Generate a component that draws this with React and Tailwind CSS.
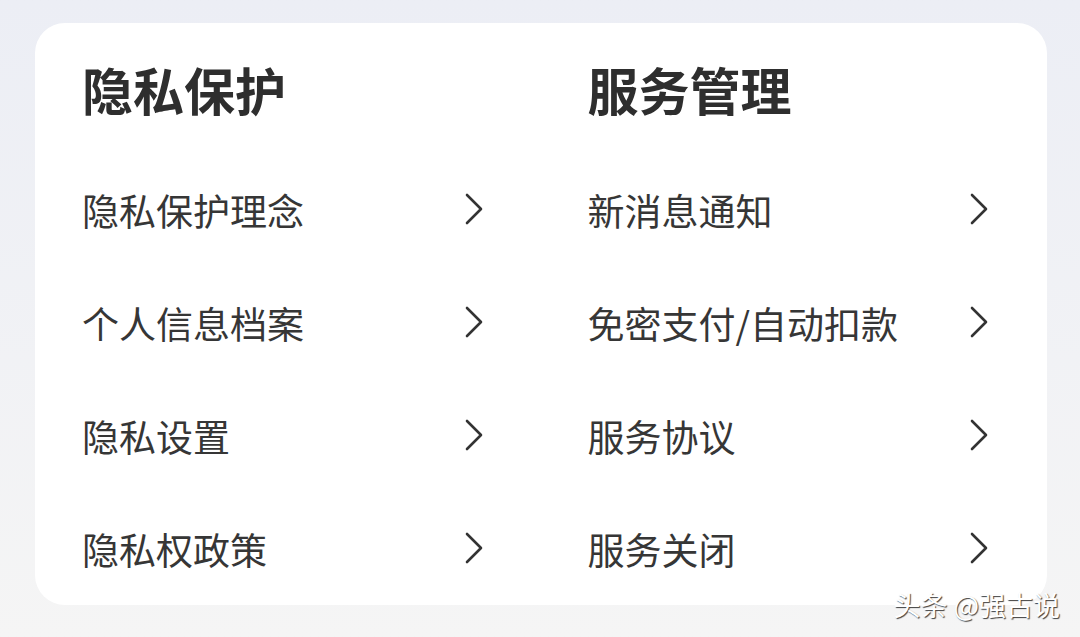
import { ChevronRight } from "lucide-react";

const sections = [
  {
    title: "隐私保护",
    items: ["隐私保护理念", "个人信息档案", "隐私设置", "隐私权政策"],
  },
  {
    title: "服务管理",
    items: ["新消息通知", "免密支付/自动扣款", "服务协议", "服务关闭"],
  },
];

function Row({ label }) {
  return (
    <div className="h-[113px] flex items-center justify-between">
      <span className="text-[37px] leading-none text-[#363636]">{label}</span>
      <svg width="20" height="32" viewBox="0 0 20 32" fill="none" className="mr-[1px] mt-[-4px]">
        <path d="M3 2 L17 16 L3 30" stroke="#333" strokeWidth="2.6" strokeLinecap="round" strokeLinejoin="round" />
      </svg>
    </div>
  );
}

export default function App() {
  return (
    <div
      className="relative w-[1080px] h-[637px] overflow-hidden bg-gradient-to-b from-[#eceef5] to-[#f5f5f5] pt-[23px] pl-[35px]"
      style={{ fontFamily: '"Noto Sans CJK SC", "Noto Sans", sans-serif' }}
    >
      <div className="w-[1012px] h-[582px] bg-white rounded-[30px] pl-[47px] pr-[57px] pt-[41px] grid grid-cols-2 gap-x-[103px]">
        {sections.map((s) => (
          <div key={s.title} className="flex flex-col">
            <h2 className="text-[51px] leading-none font-bold text-[#2e2e2e] mb-[39px]">{s.title}</h2>
            {s.items.map((item) => (
              <Row key={item} label={item} />
            ))}
          </div>
        ))}
      </div>

      {/* watermark */}
      <div className="absolute right-[20px] bottom-[19px] text-[27px] leading-none text-white [text-shadow:1px_1px_1px_rgba(0,0,0,0.75)]">
        头条 @强古说
      </div>
    </div>
  );
}
